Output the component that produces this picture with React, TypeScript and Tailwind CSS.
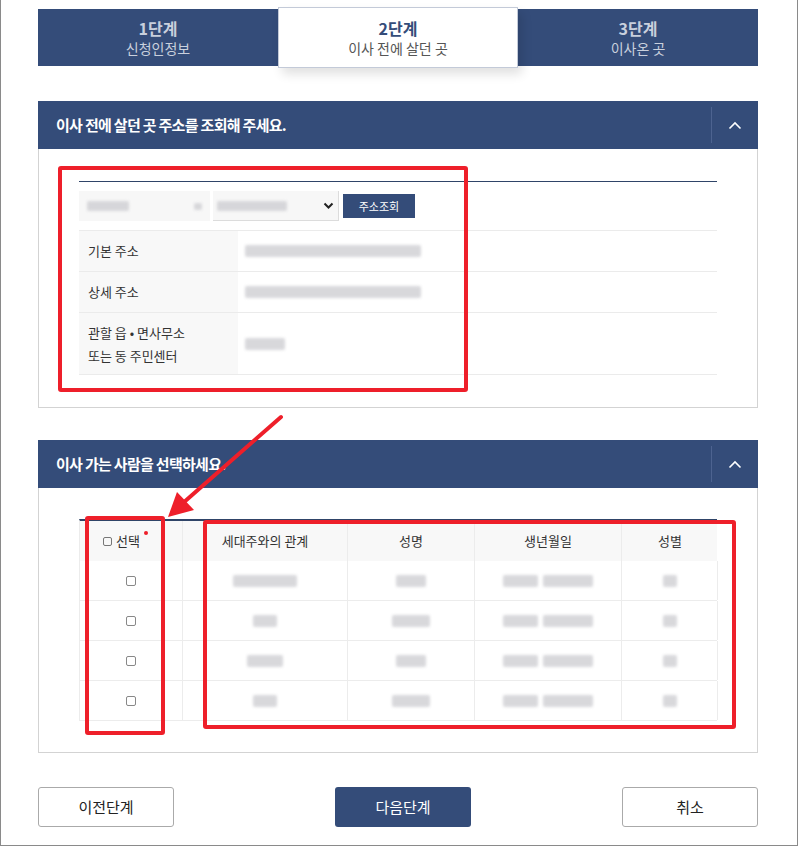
import React from "react";

const NAVY = "bg-[#344c79]";

function Blur({ w, h = 12 }: { w: number; h?: number }) {
  return (
    <div
      className="bg-[#cfcfd3] opacity-80 blur-[1.5px] rounded-[2px]"
      style={{ width: w, height: h }}
    />
  );
}

function Chevron() {
  return (
    <svg width="14" height="9" viewBox="0 0 14 9" fill="none">
      <path d="M1.5 7.5L7 2l5.5 5.5" stroke="#ffffff" strokeWidth="1.6" />
    </svg>
  );
}

function SectionHeader({ title }: { title: string }) {
  return (
    <div className={`${NAVY} h-[48px] flex items-center justify-between`}>
      <span className="pl-[18px] text-white font-bold text-[15px] tracking-[-0.7px]">
        {title}
      </span>
      <div className="flex items-center h-full py-[6px]">
        <div className="w-px h-full bg-[#4d6390]" />
        <div className="w-[46px] flex justify-center">
          <Chevron />
        </div>
      </div>
    </div>
  );
}

function Tab({ step, label }: { step: string; label: string }) {
  return (
    <div className={`${NAVY} flex-1 h-[57px] flex flex-col items-center justify-center`}>
      <span className="text-[#c9d0dd] font-bold text-[16px] leading-[20px]">{step}</span>
      <span className="text-[#c9d0dd] text-[14px] leading-[20px]">{label}</span>
    </div>
  );
}

export default function App() {
  const rows = [
    { rel: 64, name: 30, sex: 14 },
    { rel: 24, name: 38, sex: 14 },
    { rel: 36, name: 30, sex: 14 },
    { rel: 24, name: 38, sex: 14 },
  ];

  return (
    <div className="relative w-[798px] h-[846px] bg-white border-l border-r border-b border-[#8a8a8a] font-['Noto_Sans_CJK_KR','Noto_Sans',sans-serif] text-[#333]">
      <div className="pl-[37px] pr-[39px] pt-[9px]">
        {/* steps */}
        <div className="flex items-start">
          <Tab step="1단계" label="신청인정보" />
          <div className="w-[240px] h-[61px] -mt-[2px] bg-white border border-[#c3cad8] shadow-[4px_6px_10px_rgba(0,0,0,0.12)] flex flex-col items-center justify-center z-10">
            <span className="text-[#344c79] font-bold text-[16px] leading-[20px]">2단계</span>
            <span className="text-[#555] text-[14px] leading-[20px]">이사 전에 살던 곳</span>
          </div>
          <Tab step="3단계" label="이사온 곳" />
        </div>

        {/* section 1 */}
        <div className="mt-[33px]">
          <SectionHeader title="이사 전에 살던 곳 주소를 조회해 주세요." />
          <div className="h-[259px] border border-t-0 border-[#d3d3d3] px-[40px] pt-[32px]">
            <div className="border-t border-[#2f4468]">
              <div className="h-[49px] flex items-center border-b border-[#ebebeb]">
                <div className="w-[131px] h-[30px] bg-[#f7f7f7] flex items-center justify-between px-[8px]">
                  <Blur w={42} h={10} />
                  <Blur w={8} h={7} />
                </div>
                <div className="ml-[3px] w-[126px] h-[30px] bg-[#f7f7f7] border-r border-b border-[#dcdcdc] flex items-center justify-between pl-[4px] pr-[4px]">
                  <Blur w={70} h={10} />
                  <svg width="11" height="8" viewBox="0 0 11 8">
                    <path d="M1.5 1.5l4 4 4-4" stroke="#222" strokeWidth="2" fill="none" />
                  </svg>
                </div>
                <button className={`ml-[4px] w-[72px] h-[24px] ${NAVY} text-white text-[11px]`}>
                  주소조회
                </button>
              </div>
              <div className="flex h-[41px] border-b border-[#ebebeb]">
                <div className="w-[159px] bg-[#f8f8f8] flex items-center pl-[9px] text-[13px]">기본 주소</div>
                <div className="flex items-center pl-[7px]"><Blur w={176} /></div>
              </div>
              <div className="flex h-[41px] border-b border-[#ebebeb]">
                <div className="w-[159px] bg-[#f8f8f8] flex items-center pl-[9px] text-[13px]">상세 주소</div>
                <div className="flex items-center pl-[7px]"><Blur w={176} /></div>
              </div>
              <div className="flex h-[62px] border-b border-[#ebebeb]">
                <div className="w-[159px] bg-[#f8f8f8] flex flex-col justify-center pl-[9px] text-[13px] leading-[23px]">
                  <span>관할 읍 • 면사무소</span>
                  <span>또는 동 주민센터</span>
                </div>
                <div className="flex items-center pl-[7px]"><Blur w={40} /></div>
              </div>
            </div>
          </div>
        </div>

        {/* section 2 */}
        <div className="mt-[32px]">
          <SectionHeader title="이사 가는 사람을 선택하세요." />
          <div className="h-[265px] border border-t-0 border-[#d3d3d3] px-[40px] pt-[31px]">
            <div className="border-t-2 border-[#2f4468] border-l border-l-[#ececec]">
              <div className="grid grid-cols-[103px_165px_127px_147px_96px] text-[13px] h-[40px] bg-[#f8f8f8]">
                <div className="flex items-center pl-[23px] border-r border-[#ececec]">
                  <span className="w-[9px] h-[9px] border border-[#777] rounded-[2px] mr-[4px]" />
                  <span>선택</span>
                </div>
                <div className="flex items-center justify-center border-r border-[#ececec]">세대주와의 관계</div>
                <div className="flex items-center justify-center border-r border-[#ececec]">성명</div>
                <div className="flex items-center justify-center border-r border-[#ececec]">생년월일</div>
                <div className="flex items-center justify-center">성별</div>
              </div>
              {rows.map((r, i) => (
                <div
                  key={i}
                  className="grid grid-cols-[103px_165px_127px_147px_96px] h-[40px] border-b border-[#ececec]"
                >
                  <div className="flex items-center justify-center border-r border-[#ececec]">
                    <span className="w-[10px] h-[10px] border border-[#888] rounded-[2px]" />
                  </div>
                  <div className="flex items-center justify-center border-r border-[#ececec]"><Blur w={r.rel} /></div>
                  <div className="flex items-center justify-center border-r border-[#ececec]"><Blur w={r.name} /></div>
                  <div className="flex items-center justify-center gap-[5px] border-r border-[#ececec]">
                    <Blur w={35} />
                    <Blur w={50} />
                  </div>
                  <div className="flex items-center justify-center border-r border-[#ececec]"><Blur w={r.sex} /></div>
                </div>
              ))}
            </div>
          </div>
        </div>

        {/* buttons */}
        <div className="mt-[34px] flex items-center">
          <button className="w-[136px] h-[40px] border border-[#aaa] rounded-[3px] text-[15px] text-[#222]">이전단계</button>
          <button className={`ml-[161px] w-[136px] h-[40px] ${NAVY} rounded-[3px] text-[15px] text-white`}>다음단계</button>
          <button className="ml-auto w-[136px] h-[40px] border border-[#aaa] rounded-[3px] text-[15px] text-[#222]">취소</button>
        </div>
      </div>

      {/* annotations */}
      <div className="absolute left-[57px] top-[166px] w-[410px] h-[226px] border-[4px] border-[#ee1f2a] rounded-[3px]" />
      <div className="absolute left-[84px] top-[516px] w-[80px] h-[219px] border-[4px] border-[#ee1f2a] rounded-[3px]" />
      <div className="absolute left-[202px] top-[520px] w-[533px] h-[209px] border-[4px] border-[#ee1f2a] rounded-[3px]" />
      <span className="absolute left-[143px] top-[531px] w-[4px] h-[4px] rounded-full bg-[#ee1f2a]" />
      <svg className="absolute left-0 top-0" width="798" height="846" viewBox="0 0 798 846" fill="none">
        <line x1="280" y1="417" x2="182" y2="503" stroke="#ee1f2a" strokeWidth="4" strokeLinecap="round" />
        <polygon points="167,517 176,492 193,510" fill="#ee1f2a" />
      </svg>
    </div>
  );
}
